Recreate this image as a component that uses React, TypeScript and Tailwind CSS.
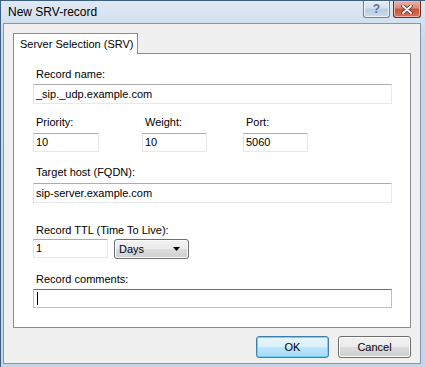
import { ReactNode } from 'react';

// ── Small Vista-style controls ────────────────────────────────────────────────

function Label({ children, className = '' }: { children: ReactNode; className?: string }) {
  return <div className={`h-[13px] pl-[3px] text-[11px] leading-[13px] text-black ${className}`}>{children}</div>;
}

function TextBox({ value, w, h = 'h-[20px]', className = '', focused = false }: {
  value: string; w: string; h?: string; className?: string; focused?: boolean;
}) {
  return (
    <div
      className={`${w} ${h} flex items-center bg-white pl-[2px] text-[11px] text-black ${className} ${
        focused
          ? 'border border-[#a4c9e3] border-t-[#3d7bad]'
          : 'border border-[#e3e9ef] border-t-[#abadb3] border-l-[#e2e3ea]'
      }`}
    >
      {focused ? <span className="ml-px h-[13px] w-px bg-black" /> : value}
    </div>
  );
}

function Button({ children, primary = false }: { children: ReactNode; primary?: boolean }) {
  return (
    <div
      className={`flex h-[22px] w-[73px] items-center justify-center rounded-[3px] border text-[11px] text-black ${
        primary
          ? 'border-[#3c7fb1] bg-[linear-gradient(#eaf6fd_0%,#d9f0fc_49%,#bee6fd_50%,#a7d9f5_100%)] shadow-[inset_0_0_0_1px_#6fd2f5]'
          : 'border-[#707070] bg-[linear-gradient(#f2f2f2_0%,#ebebeb_49%,#dddddd_50%,#cfcfcf_100%)] shadow-[inset_0_0_0_1px_#fcfcfc]'
      }`}
    >
      {children}
    </div>
  );
}

// ── Dialog ────────────────────────────────────────────────────────────────────

export default function App() {
  return (
    <div className="h-[367px] w-[425px] overflow-hidden bg-[#c7d6e6] font-['Liberation_Sans',Arial,sans-serif]">
      <div className="flex h-full flex-col border-l border-t border-[#3f5f80] bg-[linear-gradient(#dfe9f4,#c9d9ea_40px,#c5d5e6)]">

        {/* ── Title bar ─────────────────────────────────────────────── */}
        <div className="flex h-[22px] shrink-0 items-start justify-between pl-[7px] pr-[4px]">
          <span className="mt-[4px] text-[12px] leading-[15px] text-black">New SRV-record</span>
          <div className="flex gap-[3px]">
            <div className="flex h-[17px] w-[27px] items-center justify-center rounded-b-[3px] border border-t-0 border-[#6d8197] bg-[linear-gradient(#e6eef7_0%,#d3e0ee_45%,#b9cde3_50%,#c9dbee_100%)] shadow-[inset_0_0_0_1px_#eef4fa]">
              <span className="text-[12px] font-bold leading-none text-[#5d7591]">?</span>
            </div>
            <div className="flex h-[17px] w-[28px] items-center justify-center rounded-b-[3px] border border-t-0 border-[#6d2b22] bg-[linear-gradient(#e7b3a9_0%,#d88a7a_45%,#c8503b_50%,#d5755f_100%)] shadow-[inset_0_0_0_1px_#eeb4a6]">
              <svg width="12" height="9" viewBox="0 0 12 9">
                <path d="M2 1 L10 8 M10 1 L2 8" stroke="#5a2018" strokeWidth="3.4" strokeLinecap="round" />
                <path d="M2 1 L10 8 M10 1 L2 8" stroke="#ffffff" strokeWidth="2" strokeLinecap="round" />
              </svg>
            </div>
          </div>
        </div>

        {/* ── Client area ───────────────────────────────────────────── */}
        <div className="mb-[3px] ml-[2px] mr-[4px] flex flex-1 flex-col border border-[#8298b0] bg-[#f0f0f0] px-[9px] pt-[9px]">

          {/* tab header */}
          <div className="flex">
            <div className="relative z-10 -mb-px flex h-[21px] w-[125px] items-center border border-b-0 border-[#898c95] bg-white pl-[6px] text-[11px] text-black">
              Server Selection (SRV)
            </div>
          </div>

          {/* tab panel */}
          <div className="flex h-[275px] w-[398px] flex-col border border-[#898c95] bg-white pl-[19px]">
            <Label className="mt-[14px]">Record name:</Label>
            <TextBox value="_sip._udp.example.com" w="w-[359px]" className="mt-[3px]" />

            <div className="mt-[12px] flex">
              <div className="w-[109px]">
                <Label>Priority:</Label>
                <TextBox value="10" w="w-[66px]" h="h-[19px]" className="mt-[4px]" />
              </div>
              <div className="w-[101px]">
                <Label>Weight:</Label>
                <TextBox value="10" w="w-[65px]" h="h-[19px]" className="mt-[4px]" />
              </div>
              <div>
                <Label>Port:</Label>
                <TextBox value="5060" w="w-[65px]" h="h-[19px]" className="mt-[4px]" />
              </div>
            </div>

            <Label className="mt-[14px]">Target host (FQDN):</Label>
            <TextBox value="sip-server.example.com" w="w-[359px]" className="mt-[4px]" />

            <Label className="mt-[21px]">Record TTL (Time To Live):</Label>
            <div className="mt-[2px] flex h-[20px] items-start gap-[6px]">
              <TextBox value="1" w="w-[75px]" h="h-[19px]" />
              <div className="flex h-[20px] w-[75px] items-center justify-between rounded-[3px] border border-[#707070] bg-[linear-gradient(#f2f2f2_0%,#ebebeb_49%,#dddddd_50%,#cfcfcf_100%)] pl-[4px] pr-[8px] text-[11px] text-black shadow-[inset_0_0_0_1px_#fcfcfc]">
                <span>Days</span>
                <svg width="7" height="4" viewBox="0 0 7 4">
                  <path d="M0 0 H7 L3.5 4 Z" fill="#000" />
                </svg>
              </div>
            </div>

            <Label className="mt-[14px]">Record comments:</Label>
            <TextBox value="" focused w="w-[359px]" h="h-[19px]" className="mt-[3px]" />
          </div>

          {/* buttons */}
          <div className="mt-[8px] flex justify-end gap-[9px] pr-[0px]">
            <Button primary>OK</Button>
            <Button>Cancel</Button>
          </div>
        </div>
      </div>
    </div>
  );
}
